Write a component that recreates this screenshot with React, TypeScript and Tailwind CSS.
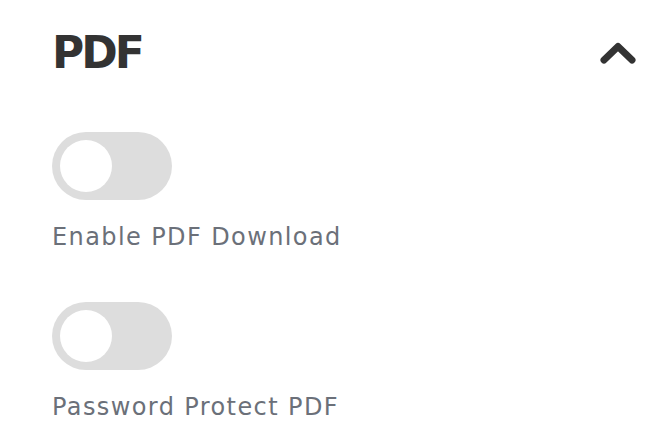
import React from "react";

function Toggle() {
  return (
    <div className="w-[120px] h-[68px] rounded-full bg-[#dddddd] flex items-center pl-[8px]">
      <div className="w-[52px] h-[52px] rounded-full bg-white" />
    </div>
  );
}

export default function App() {
  return (
    <div className="w-[662px] h-[444px] bg-white overflow-hidden pl-[52px] pr-[26px]" style={{ fontFamily: '"DejaVu Sans", sans-serif' }}>
      <div className="flex items-center justify-between h-[106px]">
        <div className="text-[44px] font-bold text-[#333333] leading-none tracking-[-3px]">PDF</div>
        <svg width="36" height="22" viewBox="0 0 36 22">
          <path d="M4 18 L18 4.5 L32 18" fill="none" stroke="#333333" strokeWidth="7" strokeLinecap="round" strokeLinejoin="round" />
        </svg>
      </div>
      <div className="mt-[26px]">
        <Toggle />
        <div className="mt-[25px] text-[24px] text-[#6b7079] leading-none tracking-[1.4px]">Enable PDF Download</div>
      </div>
      <div className="mt-[53px]">
        <Toggle />
        <div className="mt-[25px] text-[24px] text-[#6b7079] leading-none tracking-[1.4px]">Password Protect PDF</div>
      </div>
    </div>
  );
}
